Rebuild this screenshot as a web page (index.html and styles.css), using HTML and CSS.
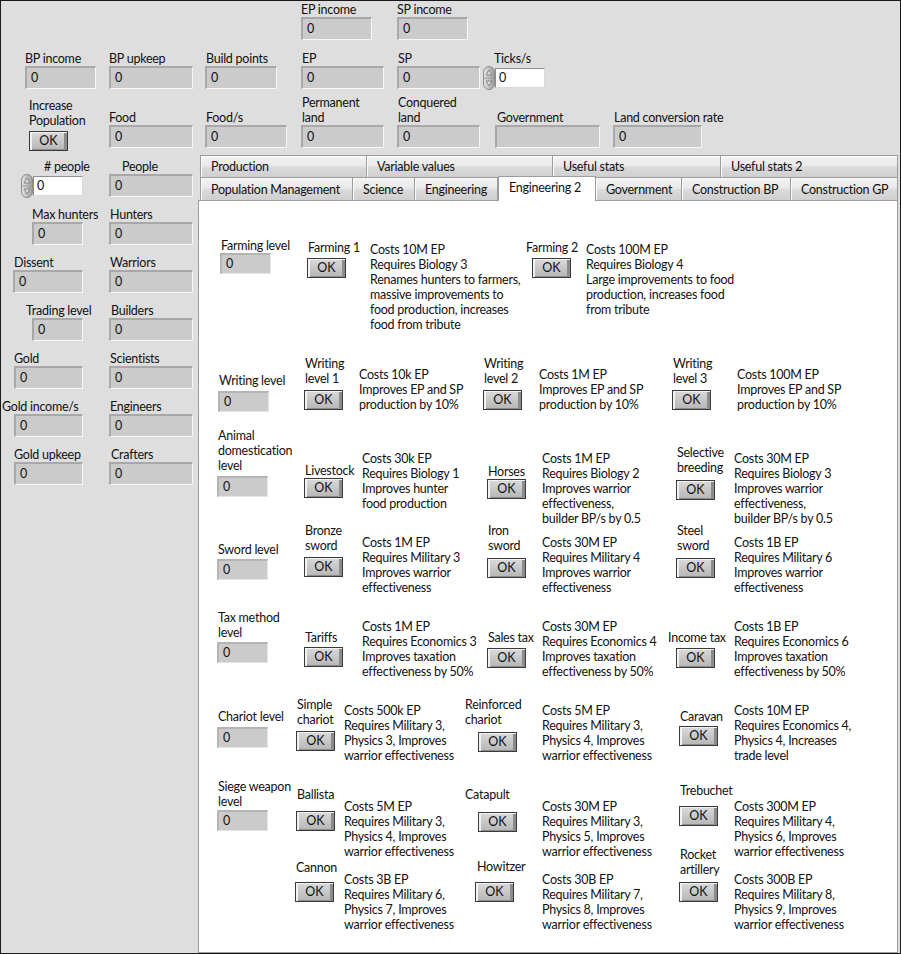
FILE: index.html
```html
<!DOCTYPE html>
<html>
<head>
<meta charset="utf-8">
<link rel="stylesheet" href="styles.css">
</head>
<body>
<div class="window">
  <div class="top">
    <div class="field ra col4"><div class="lbl">EP income</div><div class="ind w71">0</div></div>
    <div class="field ra col5"><div class="lbl">SP income</div><div class="ind w71">0</div></div>

    <div class="field rb"><div class="lbl">BP income</div><div class="ind w71">0</div></div>
    <div class="field rb"><div class="lbl">BP upkeep</div><div class="ind w84">0</div></div>
    <div class="field rb"><div class="lbl lx1">Build points</div><div class="ind w72">0</div></div>
    <div class="field rb"><div class="lbl lx1">EP</div><div class="ind w83">0</div></div>
    <div class="field rb"><div class="lbl lx1">SP</div><div class="ind w83">0</div></div>
    <div class="field rb"><div class="lbl ticks">Ticks/s</div>
      <div class="num">
        <svg class="spin" width="12" height="24" viewBox="0 0 12 24"><defs><linearGradient id="sg1" x1="0" x2="1"><stop offset="0" stop-color="#e6e6e6"/><stop offset="1" stop-color="#9a9a9a"/></linearGradient></defs><rect x="0.5" y="0.5" width="11" height="23" rx="5.5" fill="url(#sg1)" stroke="#8c8c8c"/><line x1="1" y1="12" x2="11" y2="12" stroke="#9a9a9a"/><path d="M6 4 L9 9 H3 Z" fill="#d8d8d8" stroke="#7a7a7a" stroke-width="0.8"/><path d="M6 20 L9 15 H3 Z" fill="#d8d8d8" stroke="#7a7a7a" stroke-width="0.8"/></svg>
        <div class="wbox">0</div>
      </div>
    </div>

    <div class="field rc incpop"><div class="lbl">Increase<br>Population</div><div class="btn">OK</div></div>
    <div class="field rc"><div class="lbl">Food</div><div class="ind w84">0</div></div>
    <div class="field rc"><div class="lbl lx1">Food/s</div><div class="ind w82">0</div></div>
    <div class="field rc"><div class="lbl lx1">Permanent<br>land</div><div class="ind w83">0</div></div>
    <div class="field rc"><div class="lbl lx1">Conquered<br>land</div><div class="ind w83">0</div></div>
    <div class="field rc gov"><div class="lbl lx2">Government</div><div class="ind w105"></div></div>
    <div class="field rc"><div class="lbl lx1">Land conversion rate</div><div class="ind w89">0</div></div>
  </div>

  <div class="main">
    <div class="side">
      <div class="field ca"><div class="lbl lx23">&#35; people</div>
        <div class="num">
          <svg class="spin" width="12" height="24" viewBox="0 0 12 24"><defs><linearGradient id="sg2" x1="0" x2="1"><stop offset="0" stop-color="#e6e6e6"/><stop offset="1" stop-color="#9a9a9a"/></linearGradient></defs><rect x="0.5" y="0.5" width="11" height="23" rx="5.5" fill="url(#sg2)" stroke="#8c8c8c"/><line x1="1" y1="12" x2="11" y2="12" stroke="#9a9a9a"/><path d="M6 4 L9 9 H3 Z" fill="#d8d8d8" stroke="#7a7a7a" stroke-width="0.8"/><path d="M6 20 L9 15 H3 Z" fill="#d8d8d8" stroke="#7a7a7a" stroke-width="0.8"/></svg>
          <div class="wbox">0</div>
        </div>
      </div>
      <div class="field cb"><div class="lbl lx13">People</div><div class="ind w84">0</div></div>

      <div class="field ca"><div class="lbl">Max hunters</div><div class="ind w51">0</div></div>
      <div class="field cb"><div class="lbl lx1">Hunters</div><div class="ind w84">0</div></div>

      <div class="field ca"><div class="lbl lx1">Dissent</div><div class="ind w70">0</div></div>
      <div class="field cb"><div class="lbl lx1">Warriors</div><div class="ind w84">0</div></div>

      <div class="field ca"><div class="lbl lxm6">Trading level</div><div class="ind w51">0</div></div>
      <div class="field cb"><div class="lbl lx2">Builders</div><div class="ind w84">0</div></div>

      <div class="field ca"><div class="lbl">Gold</div><div class="ind w69">0</div></div>
      <div class="field cb"><div class="lbl lx1">Scientists</div><div class="ind w84">0</div></div>

      <div class="field ca"><div class="lbl lxm12">Gold income/s</div><div class="ind w69">0</div></div>
      <div class="field cb"><div class="lbl lx1">Engineers</div><div class="ind w84">0</div></div>

      <div class="field ca"><div class="lbl">Gold upkeep</div><div class="ind w69">0</div></div>
      <div class="field cb"><div class="lbl lx2">Crafters</div><div class="ind w84">0</div></div>
    </div>

    <div class="tabs">
      <div class="tabrow trow-top">
        <div class="tab t167">Production</div>
        <div class="tab t186">Variable values</div>
        <div class="tab t168">Useful stats</div>
        <div class="tab t177">Useful stats 2</div>
      </div>
      <div class="tabrow trow-bot">
        <div class="tab t153">Population Management</div>
        <div class="tab t62">Science</div>
        <div class="tab t83">Engineering</div>
        <div class="tab sel t98">Engineering 2</div>
        <div class="tab t86">Government</div>
        <div class="tab t109">Construction BP</div>
        <div class="tab t107">Construction GP</div>
      </div>
      <div class="page">
        <div class="row r-farm">
          <div class="lvl"><div class="lbl">Farming level</div><div class="ind sm">0</div></div>
          <div class="ctl"><div class="lbl">Farming 1</div><div class="btn">OK</div></div>
          <div class="desc">Costs 10M EP<br>Requires Biology 3<br>Renames hunters to farmers,<br>massive improvements to<br>food production, increases<br>food from tribute</div>
          <div class="ctl c-farm2"><div class="lbl">Farming 2</div><div class="btn">OK</div></div>
          <div class="desc">Costs 100M EP<br>Requires Biology 4<br>Large improvements to food<br>production, increases food<br>from tribute</div>
        </div>

        <div class="row r-writ">
          <div class="lvl"><div class="lbl">Writing level</div><div class="ind sm">0</div></div>
          <div class="ctl"><div class="lbl">Writing<br>level 1</div><div class="btn">OK</div></div>
          <div class="desc">Costs 10k EP<br>Improves EP and SP<br>production by 10%</div>
          <div class="ctl"><div class="lbl">Writing<br>level 2</div><div class="btn">OK</div></div>
          <div class="desc">Costs 1M EP<br>Improves EP and SP<br>production by 10%</div>
          <div class="ctl"><div class="lbl">Writing<br>level 3</div><div class="btn">OK</div></div>
          <div class="desc">Costs 100M EP<br>Improves EP and SP<br>production by 10%</div>
        </div>

        <div class="row cols-a r-anim">
          <div class="lvl"><div class="lbl">Animal<br>domestication<br>level</div><div class="ind sm">0</div></div>
          <div class="ctl"><div class="lbl">Livestock</div><div class="btn">OK</div></div>
          <div class="desc">Costs 30k EP<br>Requires Biology 1<br>Improves hunter<br>food production</div>
          <div class="ctl c-horses"><div class="lbl">Horses</div><div class="btn">OK</div></div>
          <div class="desc">Costs 1M EP<br>Requires Biology 2<br>Improves warrior<br>effectiveness,<br>builder BP/s by 0.5</div>
          <div class="ctl c-selb"><div class="lbl">Selective<br>breeding</div><div class="btn">OK</div></div>
          <div class="desc">Costs 30M EP<br>Requires Biology 3<br>Improves warrior<br>effectiveness,<br>builder BP/s by 0.5</div>
        </div>

        <div class="row cols-a r-sword">
          <div class="lvl"><div class="lbl">Sword level</div><div class="ind sm">0</div></div>
          <div class="ctl"><div class="lbl">Bronze<br>sword</div><div class="btn">OK</div></div>
          <div class="desc">Costs 1M EP<br>Requires Military 3<br>Improves warrior<br>effectiveness</div>
          <div class="ctl g5"><div class="lbl">Iron<br>sword</div><div class="btn">OK</div></div>
          <div class="desc">Costs 30M EP<br>Requires Military 4<br>Improves warrior<br>effectiveness</div>
          <div class="ctl g5"><div class="lbl">Steel<br>sword</div><div class="btn">OK</div></div>
          <div class="desc">Costs 1B EP<br>Requires Military 6<br>Improves warrior<br>effectiveness</div>
        </div>

        <div class="row cols-a r-tax">
          <div class="lvl"><div class="lbl">Tax method<br>level</div><div class="ind sm">0</div></div>
          <div class="ctl"><div class="lbl">Tariffs</div><div class="btn">OK</div></div>
          <div class="desc">Costs 1M EP<br>Requires Economics 3<br>Improves taxation<br>effectiveness by 50%</div>
          <div class="ctl g3"><div class="lbl">Sales tax</div><div class="btn">OK</div></div>
          <div class="desc">Costs 30M EP<br>Requires Economics 4<br>Improves taxation<br>effectiveness by 50%</div>
          <div class="ctl g3 c-inc"><div class="lbl">Income tax</div><div class="btn">OK</div></div>
          <div class="desc">Costs 1B EP<br>Requires Economics 6<br>Improves taxation<br>effectiveness by 50%</div>
        </div>

        <div class="row cols-c r-char">
          <div class="lvl"><div class="lbl">Chariot level</div><div class="ind sm">0</div></div>
          <div class="ctl c-first"><div class="lbl">Simple<br>chariot</div><div class="btn">OK</div></div>
          <div class="desc">Costs 500k EP<br>Requires Military 3,<br>Physics 3, Improves<br>warrior effectiveness</div>
          <div class="ctl c-mid g5"><div class="lbl">Reinforced<br>chariot</div><div class="btn">OK</div></div>
          <div class="desc">Costs 5M EP<br>Requires Military 3,<br>Physics 4, Improves<br>warrior effectiveness</div>
          <div class="ctl c-car"><div class="lbl">Caravan</div><div class="btn">OK</div></div>
          <div class="desc">Costs 10M EP<br>Requires Economics 4,<br>Physics 4, Increases<br>trade level</div>
        </div>

        <div class="row cols-c r-siege">
          <div class="lvl"><div class="lbl">Siege weapon<br>level</div><div class="ind sm">0</div></div>
          <div class="ctl c-first"><div class="lbl">Ballista</div><div class="btn">OK</div></div>
          <div class="desc">Costs 5M EP<br>Requires Military 3,<br>Physics 4, Improves<br>warrior effectiveness</div>
          <div class="ctl c-mid g10"><div class="lbl">Catapult</div><div class="btn">OK</div></div>
          <div class="desc">Costs 30M EP<br>Requires Military 3,<br>Physics 5, Improves<br>warrior effectiveness</div>
          <div class="ctl c-treb"><div class="lbl">Trebuchet</div><div class="btn">OK</div></div>
          <div class="desc">Costs 300M EP<br>Requires Military 4,<br>Physics 6, Improves<br>warrior effectiveness</div>
        </div>

        <div class="row cols-c r-siege2">
          <div class="ctl c-cannon"><div class="lbl">Cannon</div><div class="btn">OK</div></div>
          <div class="desc">Costs 3B EP<br>Requires Military 6,<br>Physics 7, Improves<br>warrior effectiveness</div>
          <div class="ctl c-how"><div class="lbl">Howitzer</div><div class="btn">OK</div></div>
          <div class="desc">Costs 30B EP<br>Requires Military 7,<br>Physics 8, Improves<br>warrior effectiveness</div>
          <div class="ctl c-rock"><div class="lbl">Rocket<br>artillery</div><div class="btn">OK</div></div>
          <div class="desc">Costs 300B EP<br>Requires Military 8,<br>Physics 9, Improves<br>warrior effectiveness</div>
        </div>
      </div>
    </div>
  </div>
</div>
</body>
</html>
```

FILE: styles.css
```css
* { box-sizing: border-box; }
body {
  margin: 0;
  font-family: Lato, "Liberation Sans", sans-serif;
  font-size: 12.5px;
  letter-spacing: -0.25px;
  color: #111;
}
.window {
  width: 901px;
  height: 954px;
  border: 1px solid #1a1a1a;
  background: #dedede;
  display: flex;
  flex-direction: column;
  overflow: hidden;
}
.lbl { line-height: 15px; white-space: nowrap; }
.lx1 { margin-left: 1px; }
.lx2 { margin-left: 2px; }
.lx13 { margin-left: 13px; }
.lx23 { margin-left: 23px; }
.lxm6 { margin-left: -6px; }
.lxm12 { margin-left: -12px; }

.field { display: flex; flex-direction: column; align-items: flex-start; }

.ind {
  height: 23px;
  border-style: solid;
  border-width: 2px 1px 1px 2px;
  border-color: #a8a8a8 #f7f7f7 #f7f7f7 #a8a8a8;
  background: #cbcbcb;
  padding-left: 4px;
  line-height: 19px;
}
.ind.sm { width: 51px; height: 21px; line-height: 17px; border-color: #b4b4b4 #e4e4e4 #e4e4e4 #b4b4b4; }
.w51 { width: 51px; } .w69 { width: 69px; } .w70 { width: 70px; } .w71 { width: 71px; }
.w72 { width: 72px; } .w82 { width: 82px; } .w83 { width: 83px; } .w84 { width: 84px; }
.w89 { width: 89px; } .w105 { width: 105px; }

.num { display: flex; align-items: center; height: 23px; }
.spin { display: block; }
.wbox {
  width: 50px;
  height: 20px;
  background: #fff;
  border-style: solid;
  border-width: 1px;
  border-color: #8e8e8e #dadada #dadada #8e8e8e;
  padding-left: 3px;
  line-height: 18px;
}

.btn {
  width: 39px;
  height: 20px;
  border: 1px solid #3a3a3a;
  background: linear-gradient(#dadada, #b6b6b6);
  box-shadow: inset 2px 1px 0 #f2f2f2, inset -3px -1px 0 #8c8c8c;
  text-align: center;
  line-height: 18px;
  letter-spacing: 0;
}

/* ---------- top area ---------- */
.top {
  display: grid;
  grid-template-columns: 84px 96px 96px 96px 86px 130px 1fr;
  grid-template-rows: 49px 43px 54px;
  padding: 1px 0 7px 24px;
  flex: none;
}
.ra { grid-row: 1; align-self: start; }
.rb { grid-row: 2; align-self: start; }
.rc { grid-row: 3; align-self: end; }
.col4 { grid-column: 4; }
.col5 { grid-column: 5; }
.ticks { margin-left: 11px; }
.incpop { margin-left: 4px; margin-bottom: -3px; }
.incpop .btn { margin-top: 3px; }
.gov { margin-left: 12px; }

/* ---------- main ---------- */
.main { flex: 1; display: flex; min-height: 0; }
.side {
  width: 197px;
  flex: none;
  display: grid;
  grid-template-columns: 108px 89px;
  grid-auto-rows: 38px;
  row-gap: 10px;
  padding-top: 4px;
  align-content: start;
}
.ca { justify-self: end; margin-right: 26px; }
.ca .lbl { width: 0; overflow: visible; }
.cb { justify-self: start; }

/* ---------- tabs ---------- */
.tabs { width: 700px; flex: none; display: flex; flex-direction: column; }
.tabrow { display: flex; padding-left: 2px; flex: none; }
.trow-top { height: 22px; }
.trow-bot { height: 23px; align-items: flex-end; }
.tab {
  flex: none;
  height: 100%;
  border-top: 1px solid #9c9c9c;
  border-right: 1px solid #9c9c9c;
  background: linear-gradient(#f3f3f3 0%, #eaeaea 45%, #dadada 55%, #cfcfcf 100%);
  box-shadow: inset 1px 1px 0 #fbfbfb;
  padding-left: 10px;
  line-height: 15px;
  white-space: nowrap;
  overflow: hidden;
}
.tabrow .tab:first-child { border-left: 1px solid #9c9c9c; }
.trow-top .tab { padding-top: 3px; }
.trow-bot .tab { padding-top: 4px; }
.trow-bot .tab.sel {
  position: relative;
  z-index: 1;
  height: 25px;
  margin-bottom: -1px;
  background: #fff;
  box-shadow: none;
  border-left: 1px solid #9c9c9c;
  padding-top: 3px;
}
.t62 { width: 62px; } .t83 { width: 83px; } .t86 { width: 86px; } .t98 { width: 98px; }
.t107 { width: 107px; } .t109 { width: 109px; } .t153 { width: 153px; }
.t167 { width: 167px; } .t168 { width: 168px; } .t177 { width: 177px; } .t186 { width: 186px; }

.page {
  flex: 1;
  background: #fff;
  border: 1px solid #9c9c9c;
  padding: 36px 0 0 18px;
  overflow: hidden;
}

/* ---------- page rows ---------- */
.row { display: grid; align-items: start; }
.lvl { display: flex; flex-direction: column; align-items: flex-start; margin-top: var(--lt, 0px); }
.lvl .lbl { margin-left: 1px; }
.lvl .ind { margin-top: var(--lg, 0px); }
.ctl { display: flex; flex-direction: column; align-items: flex-start; margin-top: var(--t, 0px); }
.ctl .lbl { margin-left: var(--lx, 1px); }
.ctl .btn { margin-top: var(--g, 2px); margin-left: var(--bx, 0px); }
.desc { margin-top: var(--dt, 0px); line-height: 15px; white-space: nowrap; }

.cols-a { grid-template-columns: 87px 58px 125px 55px 134px 58px 1fr; }
.cols-c { grid-template-columns: 78px 49px 120px 78px 137px 55px 1fr; }

.r-farm {
  height: 119px; padding-left: 3px;
  grid-template-columns: 87px 63px 156px 60px 1fr;
  --lt: 1px; --lg: 0px; --t: 3px; --g: 3px; --dt: 5px;
}
.c-farm2 { --lx: 0px; --bx: 6px; }

.r-writ {
  height: 72px; padding-left: 1px;
  grid-template-columns: 86px 55px 124px 56px 133px 65px 1fr;
  --lt: 17px; --lg: 3px; --t: 0px; --g: 4px; --dt: 11px;
}
.r-anim { height: 95px; --lt: 0px; --lg: 3px; --t: 35px; --g: 0px; --dt: 23px; }
.c-horses { --t: 36px; }
.c-selb { --t: 17px; --g: 5px; }

.r-sword { height: 87px; --lt: 19px; --lg: 2px; --t: 0px; --g: 4px; --dt: 12px; }
.g3 { --g: 3px; }
.g5 { --g: 5px; }
.g10 { --g: 10px; }

.r-tax { height: 87px; --lt: 0px; --lg: 2px; --t: 20px; --g: 2px; --dt: 9px; }
.c-inc { --lx: -8px; }

.r-char { height: 82px; --lt: 12px; --lg: 3px; --t: 0px; --g: 4px; --dt: 6px; }
.c-first { --lx: 2px; --bx: 1px; }
.c-mid { --bx: 14px; }
.c-car { --t: 12px; --g: 2px; }

.r-siege { height: 68px; --lt: 0px; --lg: 1px; --t: 8px; --g: 9px; --dt: 20px; }
.c-treb { --t: 4px; --g: 8px; }

.r-siege2 { --dt: 25px; }
.r-siege2 .c-cannon { grid-column: 2; --t: 13px; --g: 7px; }
.c-how { --t: 12px; --g: 8px; --lx: 13px; --bx: 11px; }
.c-rock { --t: 0px; --g: 5px; }
```
